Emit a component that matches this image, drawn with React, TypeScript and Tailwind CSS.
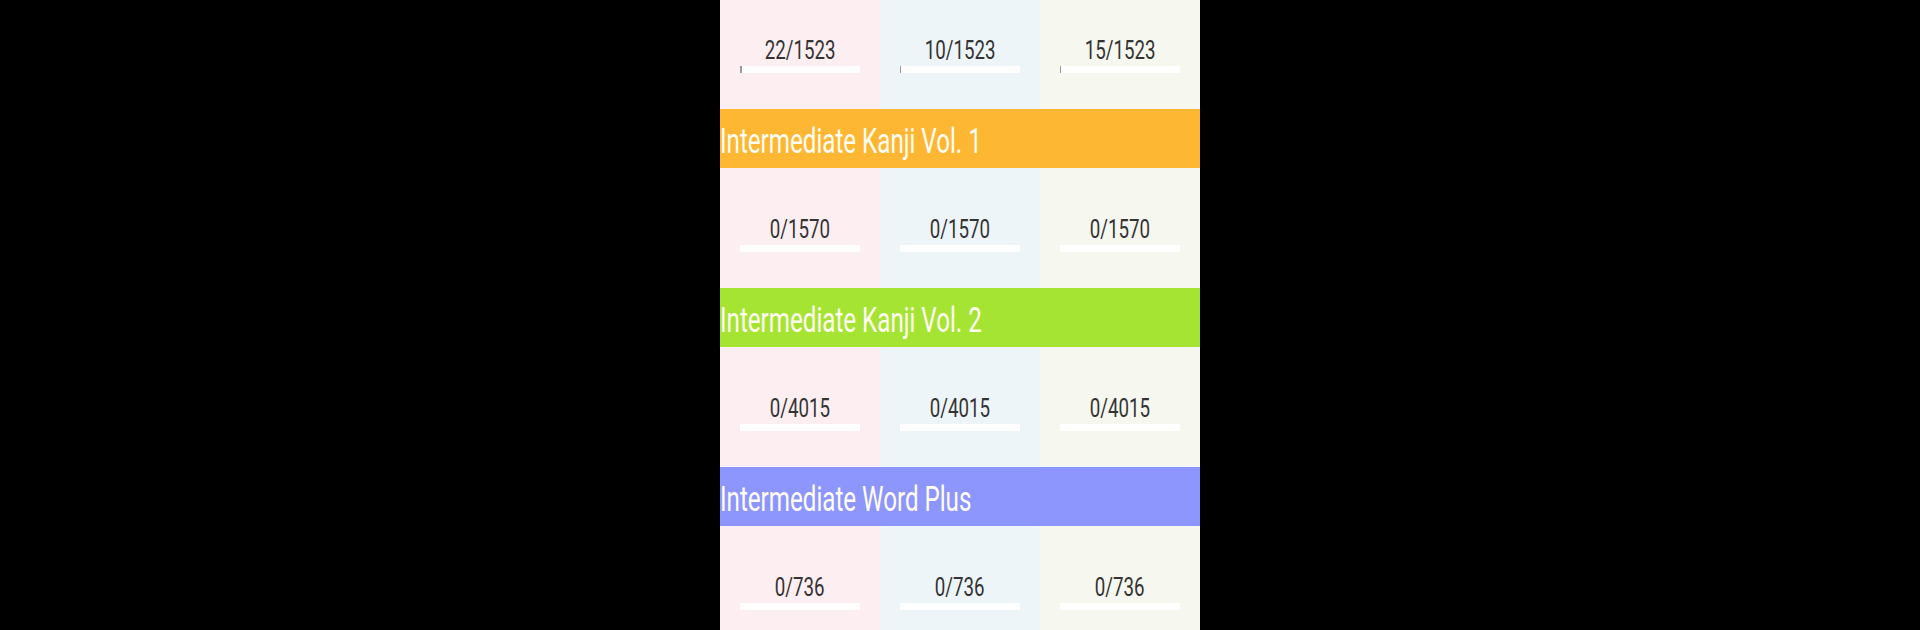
import * as React from 'react';

type Course = {
  title: string;
  headerBg: string;
  counts: [number, number, number];
  total: number;
};

const courses: Course[] = [
  { title: 'Intermediate Kanji Vol. 1', headerBg: 'bg-[#fdb733]', counts: [0, 0, 0], total: 1570 },
  { title: 'Intermediate Kanji Vol. 2', headerBg: 'bg-[#a6e433]', counts: [0, 0, 0], total: 4015 },
  { title: 'Intermediate Word Plus', headerBg: 'bg-[#8d96fc]', counts: [0, 0, 0], total: 736 },
];

const colBg = ['bg-[#fdeef2]', 'bg-[#eef5f9]', 'bg-[#f6f7ef]'];

function Cell({ done, total, bg }: { done: number; total: number; bg: string }) {
  const pct = total ? (done / total) * 100 : 0;
  return (
    <div className={`${bg} flex flex-col items-center pt-[48px]`}>
      <div className="h-[27px] text-[26px] leading-[27px] text-[#333333] scale-x-[0.72] whitespace-nowrap">
        {done}/{total}
      </div>
      <div className="mt-[2px] h-[7px] w-[120px] bg-white">
        <div className="h-full bg-[#9a9a9a]" style={{ width: `${pct}%` }} />
      </div>
    </div>
  );
}

function StatsRow({ counts, total, className = '' }: { counts: number[]; total: number; className?: string }) {
  return (
    <div className={`grid h-[120px] grid-cols-3 ${className}`}>
      {counts.map((c, i) => (
        <Cell key={i} done={c} total={total} bg={colBg[i]} />
      ))}
    </div>
  );
}

export default function App() {
  return (
    <div className="h-[630px] w-[1920px] overflow-hidden bg-black font-['Roboto',sans-serif]">
      <div className="mx-auto w-[480px]">
        {/* previous course, scrolled partly off the top */}
        <StatsRow counts={[22, 10, 15]} total={1523} className="-mt-[11px]" />

        {courses.map((c) => (
          <React.Fragment key={c.title}>
            <div className={`h-[59px] ${c.headerBg} pt-[15px]`}>
              <div className="origin-left scale-x-[0.69] whitespace-nowrap text-[35px] leading-[35px] text-[#fffdf3]">
                {c.title}
              </div>
            </div>
            <StatsRow counts={c.counts} total={c.total} />
          </React.Fragment>
        ))}
      </div>
    </div>
  );
}
